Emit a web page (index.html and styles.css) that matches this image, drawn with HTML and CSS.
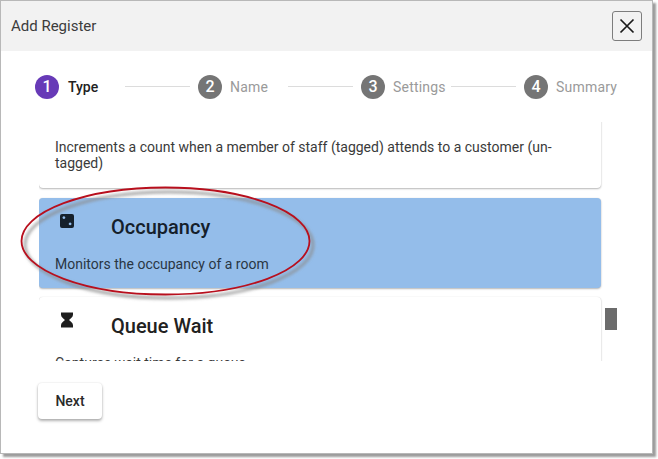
FILE: index.html
```html
<!DOCTYPE html>
<html lang="en">
<head>
<meta charset="utf-8">
<title>Add Register</title>
<link rel="stylesheet" href="styles.css">
</head>
<body>
<div class="dialog">
  <header class="dialog-head">
    <span class="dialog-title">Add Register</span>
    <button class="close" aria-label="Close">
      <svg width="16" height="16" viewBox="0 0 16 16"><path d="M1.5 1.5 14.5 14.5M14.5 1.5 1.5 14.5" fill="none" stroke="#1a1a1a" stroke-width="1.7"/></svg>
    </button>
  </header>
  <nav class="stepper">
    <div class="step active"><span class="num">1</span><span class="label">Type</span></div>
    <span class="line"></span>
    <div class="step"><span class="num">2</span><span class="label">Name</span></div>
    <span class="line"></span>
    <div class="step"><span class="num">3</span><span class="label">Settings</span></div>
    <span class="line"></span>
    <div class="step"><span class="num">4</span><span class="label">Summary</span></div>
  </nav>
  <div class="scroller">
    <div class="list">
      <article class="card card-first">
        <p class="desc">Increments a count when a member of staff (tagged) attends to a customer (un-tagged)</p>
      </article>
      <article class="card selected">
        <div class="card-head">
          <svg class="icon" width="14" height="16" viewBox="0 0 14 16"><path fill-rule="evenodd" d="M2 1h10a2 2 0 0 1 2 2v10a2 2 0 0 1-2 2H2a2 2 0 0 1-2-2V3a2 2 0 0 1 2-2ZM3.900 3.200a1.400 1.400 0 1 0 .01 0ZM10.100 9.500a1.400 1.400 0 1 0 .01 0Z" fill="#15202b"/></svg>
          <h2 class="card-title">Occupancy</h2>
        </div>
        <p class="desc">Monitors the occupancy of a room</p>
      </article>
      <article class="card">
        <div class="card-head">
          <svg class="icon" width="14" height="16" viewBox="0 0 14 16"><path d="M1 .5h12v2.300c0 2.400-2.700 3.900-4 5.200 1.300 1.300 4 2.800 4 5.200v2.300H1v-2.300C1 10.800 3.700 9.300 5 8 3.700 6.700 1 5.200 1 2.800Z" fill="#1e1e1e"/></svg>
          <h2 class="card-title">Queue Wait</h2>
        </div>
        <p class="desc">Captures wait time for a queue</p>
      </article>
    </div>
    <div class="track"><span class="thumb"></span></div>
  </div>
  <footer class="actions"><button class="next">Next</button></footer>
</div>
<svg class="callout" width="340" height="130" viewBox="0 0 340 130" aria-hidden="true">
  <defs><filter id="soft" x="-10%" y="-20%" width="120%" height="140%"><feGaussianBlur stdDeviation="1.800"/></filter></defs>
  <ellipse cx="149" cy="68" rx="144" ry="53" fill="none" stroke="#8c8c8c" stroke-opacity=".75" stroke-width="3" filter="url(#soft)"/>
  <ellipse cx="145.500" cy="64" rx="144" ry="53.500" fill="none" stroke="#b80f1d" stroke-width="1.800"/>
</svg>
</body>
</html>
```
FILE: styles.css
```css
* { box-sizing: border-box; }
html, body { margin: 0; padding: 0; background: #fff; }
body { width: 658px; height: 459px; overflow: hidden; font-family: Roboto, "Liberation Sans", sans-serif; color: #212121; }
.dialog { width: 653px; height: 454px; border: 1px solid #b8b8b8; background: #fff; box-shadow: 3px 3px 2px #9c9c9c; display: flex; flex-direction: column; }
.dialog-head { height: 50px; flex: none; background: #f2f2f2; display: flex; align-items: center; justify-content: space-between; padding: 0 10px; }
.dialog-title { font-size: 15px; color: #3c3c3c; }
.close { width: 30px; height: 30px; padding: 0; border: 1px solid #7d7d7d; border-radius: 3px; background: #f2f2f2; display: flex; align-items: center; justify-content: center; }
.stepper { height: 71px; flex: none; padding: 0 0 0 34px; display: flex; align-items: center; }
.step { width: 90px; flex: none; display: flex; align-items: center; gap: 8px; white-space: nowrap; }
.num { width: 24px; height: 24px; flex: none; border-radius: 50%; background: #757575; color: #fff; font-size: 16px; font-weight: 500; display: flex; align-items: center; justify-content: center; }
.label { font-size: 14px; color: #9a9a9a; letter-spacing: .2px; }
.active .num { background: #673ab7; }
.active .label { color: #212121; font-weight: 500; margin-left: 1px; letter-spacing: 0; }
.line { width: 65px; height: 1px; flex: none; margin-right: 8px; background: #dcdcdc; }
.scroller { height: 239px; flex: none; margin-left: 38px; display: flex; overflow: hidden; }
.list { width: 562px; flex: none; margin-top: -40px; display: flex; flex-direction: column; gap: 9.500px; }
.card { height: 90px; flex: none; padding: 16px; border-radius: 4px; background: #fff; box-shadow: 0 1px 2px rgba(0,0,0,.28), 0 0 1px rgba(0,0,0,.12); }
.card-first { height: 106px; padding-top: 57px; }
.selected { background: #94bdea; }
.card-head { height: 34px; display: flex; align-items: flex-start; }
.icon { flex: none; margin: -1px 0 0 5px; }
.card-title { margin: -3px 0 0 37px; font-size: 20px; line-height: 32px; font-weight: 500; }
.selected .card-title { color: #15202b; }
.desc { margin: 8px 0 0; font-size: 14px; line-height: 16px; color: #3a3a3a; }
.card-first .desc { margin: 0; }
.selected .desc { color: #2a3644; }
.track { width: 12px; flex: none; margin-left: 4px; padding-top: 186px; }
.thumb { display: block; height: 22px; background: #6b6b6b; }
.actions { flex: none; padding: 22px 0 0 37px; }
.next { width: 64px; height: 36px; border: 0; border-radius: 4px; background: #fff; font: 500 14px Roboto, sans-serif; color: #2a2a2a; box-shadow: 0 2px 3px rgba(0,0,0,.3), 0 0 2px rgba(0,0,0,.12); }
.callout { position: absolute; left: 20px; top: 177px; pointer-events: none; }
```
